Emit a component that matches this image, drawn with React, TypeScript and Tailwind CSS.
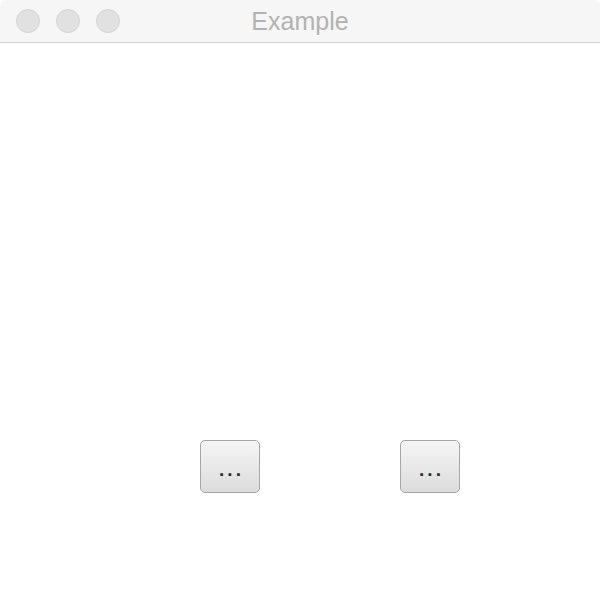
export default function App() {
  return (
    <div className="w-[600px] h-[594px] bg-white flex flex-col overflow-hidden rounded-t-[6px] font-['Liberation_Sans',sans-serif]">
      <div className="relative h-[43px] shrink-0 bg-[#f6f6f6] border-b border-[#d1d1d1] flex items-center">
        <div className="flex items-center gap-4 pl-4">
          <span className="w-6 h-6 rounded-full bg-[#e1e1e1] border border-[#d4d4d4]" />
          <span className="w-6 h-6 rounded-full bg-[#e1e1e1] border border-[#d4d4d4]" />
          <span className="w-6 h-6 rounded-full bg-[#e1e1e1] border border-[#d4d4d4]" />
        </div>
        <div className="absolute inset-0 flex items-center justify-center pt-[2px] text-[25px] text-[#b2b2b2]">
          Example
        </div>
      </div>
      <div className="flex-1 flex items-start pt-[397px] pl-[200px] gap-[140px]">
        <button className="w-[60px] h-[53px] rounded-[5px] border-[1.5px] border-[#a6a6a6] bg-gradient-to-b from-[#f6f6f6] to-[#dcdcdc] text-[#2a2a2a] text-[19px] font-semibold leading-none flex items-center justify-center pt-[6px] pl-[3px] tracking-[3px]">
          ...
        </button>
        <button className="w-[60px] h-[53px] rounded-[5px] border-[1.5px] border-[#a6a6a6] bg-gradient-to-b from-[#f6f6f6] to-[#dcdcdc] text-[#2a2a2a] text-[19px] font-semibold leading-none flex items-center justify-center pt-[6px] pl-[3px] tracking-[3px]">
          ...
        </button>
      </div>
    </div>
  );
}
